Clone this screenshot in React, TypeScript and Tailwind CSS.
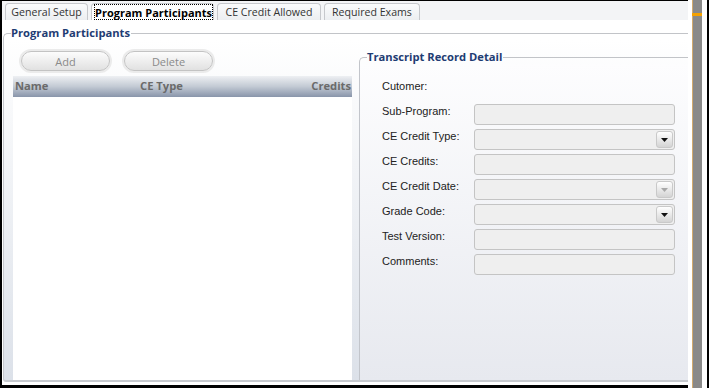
import type { ReactNode } from 'react'

const TABS = [
  { label: 'General Setup', w: 'w-[83px]' },
  { label: 'Program Participants', w: 'w-[123px]', active: true },
  { label: 'CE Credit Allowed', w: 'w-[104px]' },
  { label: 'Required Exams', w: 'w-[96px]' },
]

type Kind = 'none' | 'text' | 'select' | 'date'

const FIELDS: { label: string; kind: Kind }[] = [
  { label: 'Cutomer:', kind: 'none' },
  { label: 'Sub-Program:', kind: 'text' },
  { label: 'CE Credit Type:', kind: 'select' },
  { label: 'CE Credits:', kind: 'text' },
  { label: 'CE Credit Date:', kind: 'date' },
  { label: 'Grade Code:', kind: 'select' },
  { label: 'Test Version:', kind: 'text' },
  { label: 'Comments:', kind: 'text' },
]

const UI_FONT = "font-['Open_Sans','Noto_Sans',sans-serif]"

// ─────────────────────────────────────────────────────────
// PIECES
// ─────────────────────────────────────────────────────────
function GroupHead({ title }: { title: string }) {
  return (
    <div className="flex items-center h-[14px] flex-shrink-0">
      <div className="self-end w-[8px] h-[7px] border-l border-t border-[#c2c4c8] rounded-tl-[5px]" />
      <span className={`${UI_FONT} text-[11.2px] font-bold text-[#1f3c73] leading-none pr-px`}>{title}</span>
      <div className="flex-1 h-px bg-[#c2c4c8]" />
    </div>
  )
}

function PillButton({ children }: { children: ReactNode }) {
  return (
    <button className={`${UI_FONT} w-[89px] h-[20px] rounded-full border border-[#c3c3c3] bg-linear-to-b from-[#fcfcfc] to-[#e1e1e1] text-[11px] text-[#8a8a8a] shadow-[0_0_0_2px_#ebebeb] leading-none`}>
      {children}
    </button>
  )
}

function Arrow({ disabled }: { disabled?: boolean }) {
  return (
    <div className="w-[17px] h-full rounded-[3px] border border-[#c9c9c9] bg-linear-to-b from-white to-[#d4d4d4] flex items-center justify-center">
      <svg width="7" height="4" viewBox="0 0 7 4">
        <path d="M0 0H7L3.5 4Z" fill={disabled ? '#a8a8a8' : '#111'} />
      </svg>
    </div>
  )
}

function Input({ kind }: { kind: Kind }) {
  return (
    <div className="mt-[2px] w-[201px] h-[21px] rounded-[3px] border border-[#c4c4c4] bg-[#efefef] flex justify-end p-px">
      {kind === 'select' && <Arrow />}
      {kind === 'date' && <Arrow disabled />}
    </div>
  )
}

export default function App() {
  return (
    <div className="w-[709px] h-[388px] bg-white flex border-r-2 border-black overflow-hidden">
      {/* main panel */}
      <div className="w-[688px] h-full flex flex-col border-l-2 border-t border-b-[3px] border-black">
        {/* tabs */}
        <div className="h-[19px] bg-[#f3f4f6] flex items-end pl-[3px] gap-[3px] flex-shrink-0">
          {TABS.map((t) => (
            <div
              key={t.label}
              className={`${t.w} h-[17px] rounded-t-[4px] border border-b-0 border-[#c6c8cc] ${
                t.active ? 'bg-white' : 'bg-linear-to-b from-[#fafbfc] to-[#eceef1]'
              } flex items-center justify-center`}
            >
              {t.active ? (
                <div className={`${UI_FONT} ml-[2px] w-full h-full border border-dotted border-black flex items-center justify-center text-[11px] font-bold text-black leading-none`}>
                  {t.label}
                </div>
              ) : (
                <span className={`${UI_FONT} text-[10.6px] text-[#333] leading-none`}>{t.label}</span>
              )}
            </div>
          ))}
        </div>

        <div className="h-[6px] flex-shrink-0" />

        {/* Program Participants group */}
        <div className="ml-px flex flex-col flex-1 min-h-0">
          <GroupHead title="Program Participants" />
          <div className="flex-1 min-h-0 border-l border-b-2 border-[#c6c9ce] rounded-bl-[3px] bg-linear-to-b from-white to-[#dce1e9] pt-[10px] pl-[9px] flex gap-[7px]">
            {/* grid column */}
            <div className="w-[339px] flex flex-col">
              <div className="mt-px h-[20px] pl-[8px] flex gap-[14px] flex-shrink-0">
                <PillButton>Add</PillButton>
                <PillButton>Delete</PillButton>
              </div>
              <div className={`${UI_FONT} mt-[5px] h-[21px] flex items-center bg-linear-to-b from-[#eef0f3] via-[#c3cad4] to-[#8995aa] text-[11.2px] font-bold text-[#6a6a6a] flex-shrink-0`}>
                <span className="pl-[2px] w-[127px]">Name</span>
                <span className="flex-1">CE Type</span>
                <span className="pr-px">Credits</span>
              </div>
              <div className="flex-1 bg-white" />
            </div>

            {/* transcript detail */}
            <div className="flex-1 flex flex-col">
              <GroupHead title="Transcript Record Detail" />
              <div className="flex-1 border-l border-[#c2c5cb] bg-linear-to-b from-[#fdfdfe] to-[#e7e9ef] pt-[13px] pl-[22px]">
                {FIELDS.map((f) => (
                  <div key={f.label} className="h-[25px] flex items-start">
                    <span className="w-[92px] pt-[3px] leading-[13px] text-[11px] text-[#222] font-['Liberation_Sans',Arial,sans-serif]">
                      {f.label}
                    </span>
                    {f.kind !== 'none' && <Input kind={f.kind} />}
                  </div>
                ))}
              </div>
            </div>
          </div>
        </div>
        <div className="h-[3px] flex-shrink-0" />
      </div>

      {/* gap */}
      <div className="w-[4px]" />

      {/* scroll strip */}
      <div className="w-[10px] h-full border-l border-[#d2aa6e] bg-[#898989] pt-[13px]">
        <div className="h-[3px] bg-[#f5a100] -ml-px" />
      </div>

      <div className="flex-1" />
    </div>
  )
}
